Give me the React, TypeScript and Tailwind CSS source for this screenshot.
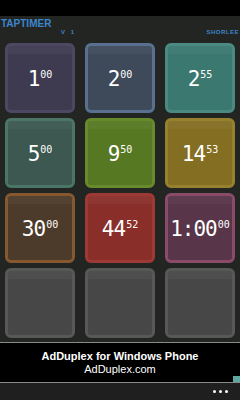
import React from "react";

type Tile = {
  main?: string;
  sup?: string;
  fill: string;
  border: string;
};

const tiles: Tile[] = [
  { main: "1", sup: "00", fill: "bg-[#3e3a50]", border: "border-[#4d4763]" },
  { main: "2", sup: "00", fill: "bg-[#3e4a5a]", border: "border-[#5a7090]" },
  { main: "2", sup: "55", fill: "bg-[#3a7870]", border: "border-[#4a8a82]" },
  { main: "5", sup: "00", fill: "bg-[#3c5850]", border: "border-[#4b7566]" },
  { main: "9", sup: "50", fill: "bg-[#567822]", border: "border-[#668a2c]" },
  { main: "14", sup: "53", fill: "bg-[#836e22]", border: "border-[#97802e]" },
  { main: "30", sup: "00", fill: "bg-[#4c3a2a]", border: "border-[#87582e]" },
  { main: "44", sup: "52", fill: "bg-[#8a2e2a]", border: "border-[#9e3a35]" },
  { main: "1:00", sup: "00", fill: "bg-[#583548]", border: "border-[#8a4a6a]" },
  { fill: "bg-[#474747]", border: "border-[#575857]" },
  { fill: "bg-[#474747]", border: "border-[#575857]" },
  { fill: "bg-[#474747]", border: "border-[#575857]" },
];

function TimerTile({ tile }: { tile: Tile }) {
  return (
    <div
      className={`h-[70px] rounded-[6px] border-[3px] ${tile.fill} ${tile.border} flex flex-col overflow-hidden`}
    >
      {/* lighter top band */}
      <div className="h-[8px] bg-white/[0.04]" />
      <div className="flex-1 flex items-center justify-center pb-[6px]">
        {tile.main && (
          <div className="flex items-start text-white font-['DejaVu_Sans_Mono',monospace] leading-none">
            <span className="text-[21px] tracking-[-1px]">{tile.main}</span>
            <span className="text-[10px] ml-[1px] mt-[1px]">{tile.sup}</span>
          </div>
        )}
      </div>
    </div>
  );
}

export default function App() {
  return (
    <div className="w-[240px] h-[400px] flex flex-col bg-[#232523] overflow-hidden font-['Liberation_Sans',sans-serif]">
      {/* status bar */}
      <div className="h-[16px] bg-black" />

      {/* header */}
      <div className="h-[27px] relative">
        <div className="absolute left-[1px] top-[3px] text-[10px] font-bold text-[#3b86cc] leading-none">
          TAPTIMER
        </div>
        <div className="absolute left-[61px] top-[13px] text-[6px] font-bold text-[#3b86cc] tracking-[2px] leading-none">
          V 1
        </div>
        <div className="absolute right-[1px] top-[13px] text-[6px] font-bold text-[#3b86cc] tracking-[0.5px] leading-none">
          SHORLEE
        </div>
      </div>

      {/* tiles */}
      <div className="grid grid-cols-3 gap-x-[10px] gap-y-[5px] px-[5px]">
        {tiles.map((t, i) => (
          <TimerTile key={i} tile={t} />
        ))}
      </div>

      {/* ad */}
      <div className="mt-[4px] border-y border-[#8a8a8a] bg-black h-[41px] relative flex flex-col items-center justify-center text-white">
        <div className="text-[11px] font-bold leading-[14px]">AdDuplex for Windows Phone</div>
        <div className="text-[11px] leading-[13px]">AdDuplex.com</div>
        <div className="absolute right-0 bottom-0 w-[7px] h-[6px] bg-[#5aa8a0]" />
      </div>

      {/* app bar */}
      <div className="flex-1 bg-[#1f1f1f] flex items-center justify-end pr-[12px]">
        <div className="flex gap-[3px]">
          <div className="w-[3px] h-[3px] rounded-full bg-white" />
          <div className="w-[3px] h-[3px] rounded-full bg-white" />
          <div className="w-[3px] h-[3px] rounded-full bg-white" />
        </div>
      </div>
    </div>
  );
}
